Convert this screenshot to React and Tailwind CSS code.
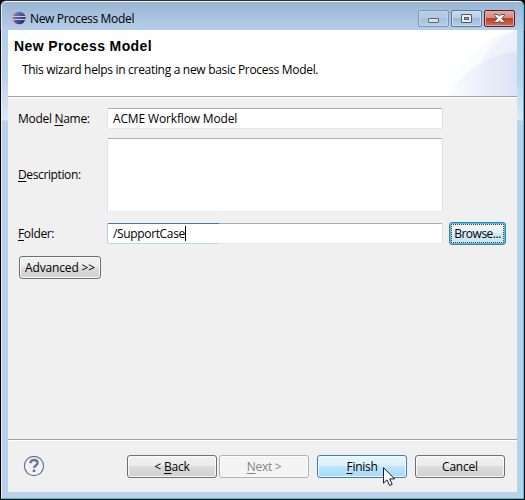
import React from 'react';

const Key = ({ children }) => <span className="underline decoration-1 underline-offset-[2px]">{children}</span>;

const Label = ({ className = '', children }) => (
  <span className={`block whitespace-pre leading-4 ${className}`}>{children}</span>
);

const buttonStyles = {
  normal: 'border-[#707070] bg-[linear-gradient(#f2f2f2_0%,#ebebeb_48%,#dddddd_50%,#cfcfcf_100%)] shadow-[inset_0_0_0_1px_#fafafa]',
  disabled: 'border-[#adb2b5] bg-[#f4f4f4] text-[#838383] shadow-[inset_0_0_0_1px_#fcfcfc]',
  hot: 'border-[#3c7fb1] bg-[linear-gradient(#eaf6fd_0%,#d9f0fc_48%,#bee6fd_50%,#a7d9f5_100%)] shadow-[inset_0_0_0_1px_#f4fbfe]',
  focused: 'border-[#3c7fb1] bg-[linear-gradient(#eef5f8_0%,#e5f1f6_48%,#d3eaf5_50%,#cbe4ef_100%)] shadow-[inset_0_0_0_1px_#36c9f4]',
};

const Button = ({ kind = 'normal', className = '', children }) => (
  <button className={`flex h-[23px] shrink-0 items-center justify-center rounded-[3px] border whitespace-pre leading-4 ${buttonStyles[kind]} ${className}`}>
    {children}
  </button>
);

const field = 'w-[336px] rounded-[2px] border border-t-[#abadb3] border-r-[#dbdfe6] border-b-[#e3e9ef] border-l-[#e2e3ea] bg-white';

const EclipseIcon = () => (
  <svg width="16" height="16" viewBox="0 0 16 16">
    <defs>
      <linearGradient id="orb" x1="0" x2="1" y1="0" y2=".7">
        <stop offset="0" stopColor="#9290bd" />
        <stop offset=".5" stopColor="#5a5996" />
        <stop offset="1" stopColor="#2d2c6c" />
      </linearGradient>
    </defs>
    <ellipse cx="5.8" cy="8" rx="5.6" ry="6" fill="#d5a4b5" />
    <circle cx="8.3" cy="8" r="6.3" fill="url(#orb)" />
    <path d="M2 6.5H14.5M2 9.5H14.5" stroke="#c4c9ee" strokeWidth="1" />
  </svg>
);

const CaptionButton = ({ className, children }) => (
  <div className={`flex h-[17px] w-[31px] items-center justify-center rounded-[2px] border ${className}`}>{children}</div>
);

const TitleBar = () => (
  <div className="flex h-[28px] items-start pl-[9px] pr-[8px]">
    <div className="mt-[8px]"><EclipseIcon /></div>
    <Label className="mt-[9px] ml-[3px] tracking-[-0.33px]">New Process Model</Label>
    <div className="mt-[8px] ml-auto flex gap-[2px]">
      <CaptionButton className="border-[#8097b5] bg-[linear-gradient(#b9cee5_0%,#b0c9e2_48%,#a5c0dd_50%,#b4cfea_100%)] shadow-[inset_0_0_0_1px_#bed3e9]">
        <svg width="29" height="15" viewBox="0 0 29 15"><rect x="9.5" y="7.5" width="10" height="4" rx=".5" fill="#dedede" stroke="#65676e" /></svg>
      </CaptionButton>
      <CaptionButton className="border-[#5f7794] bg-[linear-gradient(#c9daec_0%,#b7cde4_48%,#9cb9d7_50%,#afcfe9_100%)] shadow-[inset_0_0_0_1px_#d0e0f0]">
        <svg width="29" height="15" viewBox="0 0 29 15"><rect x="9.5" y="3.5" width="10" height="8" rx=".5" fill="#eee" stroke="#53556a" /><rect x="12.5" y="6.5" width="4" height="2" fill="#8eabc9" stroke="#53556a" /></svg>
      </CaptionButton>
      <CaptionButton className="border-[#541f27] bg-[linear-gradient(#e4a79c_0%,#d58a7b_48%,#bc3f29_50%,#cf6f4f_100%)] shadow-[inset_0_0_0_1px_#e5aaa0]">
        <svg width="29" height="15" viewBox="0 0 29 15"><path d="M9.5 3.5h3.4l1.6 1.7 1.6-1.7h3.4v1L16.8 7.5l2.7 3v1h-3.4l-1.6-1.7-1.6 1.7H9.5v-1l2.7-3-2.7-3z" fill="#f3f3f3" stroke="#5e5363" /></svg>
      </CaptionButton>
    </div>
  </div>
);

const Banner = () => (
  <svg className="ml-auto shrink-0" width="74" height="66" viewBox="0 0 74 66">
    <defs>
      <linearGradient id="outer" x1="0" x2="1"><stop offset="0" stopColor="#fff" /><stop offset=".5" stopColor="#f9fbfe" /><stop offset="1" stopColor="#f0f3fc" /></linearGradient>
      <linearGradient id="inner" x1="0" x2="1"><stop offset="0" stopColor="#fdfdff" /><stop offset="1" stopColor="#dce3f6" /></linearGradient>
    </defs>
    <path d="M0 66C14 34 38 8 74 0V66Z" fill="url(#outer)" />
    <path d="M36 35C45 20 57 7 74 0V66H36Z" fill="#e5eaf8" opacity=".45" />
    <path d="M3 66C18 43 44 25 74 21V66Z" fill="url(#inner)" />
  </svg>
);

const HelpIcon = () => (
  <svg width="22" height="22" viewBox="0 0 22 22">
    <circle cx="11" cy="11" r="9.6" fill="#f1f3f6" stroke="#62718a" strokeWidth="1.1" />
    <path d="M7.4 8.3C7.4 3.7 14.6 4 14.6 8c0 2.6-3.5 2.5-3.5 5.1" fill="none" stroke="#677691" strokeWidth="2.4" />
    <rect x="9.7" y="14.5" width="2.7" height="2.5" rx=".5" fill="#677691" />
  </svg>
);

export default function App() {
  return (
    <div className="relative h-[500px] w-[525px] overflow-hidden bg-black font-['Open_Sans','Noto_Sans',sans-serif] text-[12px] text-black">
      <div className="h-full rounded-t-[6px] bg-[linear-gradient(#332e33_0,#332e33_30px,#000_31px)] p-px">
        <div className="h-full rounded-t-[5px] border border-t-[#eff6fc] border-r-[#35ccec] border-b-[#26cbe4] border-l-[#e5f0f9] bg-[linear-gradient(#9ab5d3_0px,#b4cee9_28px,#bbd2eb_75px,#dce8f6_118px,#b9d1ea_119px,#b9d1ea_100%)]">
          <TitleBar />
          <main className="mx-[6px] flex h-[462px] flex-col bg-[#f0f0f0]">
            <header className="flex h-[66px] shrink-0 bg-white">
              <div className="shrink-0 pt-[8px] pl-[6px]">
                <h1 className="font-['Liberation_Sans',Arial,sans-serif] text-[14px] leading-4 font-bold tracking-[0.38px]">New Process Model</h1>
                <Label className="mt-[8px] ml-[8px] tracking-[-0.31px]">This wizard helps in creating a new basic Process Model.</Label>
              </div>
              <Banner />
            </header>
            <div className="h-[2px] shrink-0 border-t border-[#a0a0a0] bg-white" />
            <form className="flex flex-1 flex-col pt-[10px] pl-[10px]">
              <div className="flex h-[21px] items-center">
                <Label className="w-[89px] tracking-[-0.3px]">Model <Key>N</Key>ame:</Label>
                <div className={`${field} flex h-[21px] items-center pl-[5px]`}><Label className="tracking-[-0.15px]">ACME Workflow Model</Label></div>
              </div>
              <div className="mt-[9px] flex h-[74px] items-center">
                <Label className="w-[89px] tracking-[-0.38px]"><Key>D</Key>escription:</Label>
                <div className={`${field} h-[74px]`} />
              </div>
              <div className="mt-[10px] flex h-[23px] items-center">
                <Label className="w-[89px] tracking-[-0.35px]"><Key>F</Key>older:</Label>
                <div className={`${field} relative flex h-[21px] items-center pl-[5px]`}>
                  <div className="absolute -top-px -left-px h-[21px] w-[112px] rounded-l-[2px] border border-r-0 border-t-[#3d7bad] border-b-[#b7d9ed] border-l-[#b5cfe7]" />
                  <Label className="tracking-[-0.35px]">/SupportCase</Label>
                  <div className="h-[15px] w-px bg-black" />
                </div>
                <Button kind="focused" className="relative ml-[6px] w-[57px] tracking-[-0.5px]">
                  <span className="absolute inset-[1px] border border-dotted border-[#703018]" />
                  Browse...
                </Button>
              </div>
              <Button className="mt-[11px] ml-px w-[82px] tracking-[-0.15px]">Advanced &gt;&gt;</Button>
            </form>
            <div className="h-[2px] shrink-0 border-t border-[#a0a0a0] bg-white" />
            <footer className="flex h-[51px] shrink-0 items-start pt-[14px] pl-[15px]">
              <HelpIcon />
              <Button className="ml-[82px] w-[90px] tracking-[-0.2px]">&lt; <Key>B</Key>ack</Button>
              <Button kind="disabled" className="ml-[2px] w-[90px] tracking-[-0.3px]"><Key>N</Key>ext &gt;</Button>
              <Button kind="hot" className="ml-[8px] w-[90px] tracking-[-0.3px]"><Key>F</Key>inish</Button>
              <Button className="ml-[8px] w-[90px] tracking-[-0.2px]">Cancel</Button>
            </footer>
          </main>
        </div>
      </div>
      <svg className="absolute top-[467px] left-[383px]" width="14" height="21" viewBox="0 0 14 21">
        <path d="M.5.7V16.2L4 12.8 6.6 18.5 9.2 17.3 6.7 11.9H11.6Z" fill="#fff" stroke="#17172b" strokeWidth="1" />
      </svg>
    </div>
  );
}
